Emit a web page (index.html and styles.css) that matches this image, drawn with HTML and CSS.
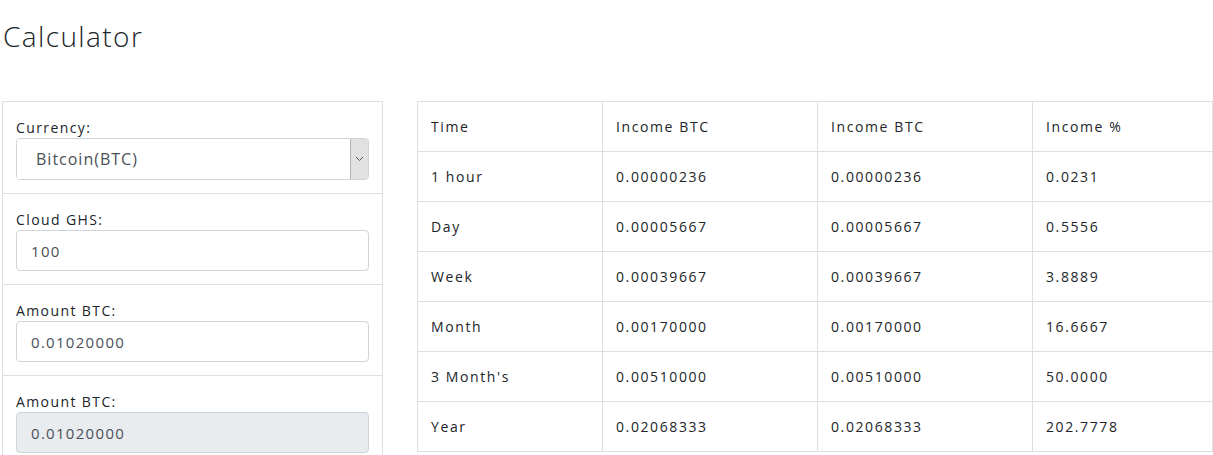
FILE: index.html
```html
<!DOCTYPE html>
<html lang="en">
<head>
    <meta charset="UTF-8">
    <meta name="viewport" content="width=device-width, initial-scale=1.0">
    <title>Calculator</title>
    <link rel="stylesheet" href="styles.css">
</head>
<body>
    <div class="page">
        <h1>Calculator</h1>
        <div class="calc-row">
            <div class="calc-form">
                <div class="calc-item">
                    <label for="currency">Currency:</label>
                    <div class="select-box">
                        <select id="currency">
                            <option>Bitcoin(BTC)</option>
                        </select>
                        <span class="select-arrow">
                            <svg width="9" height="6" viewBox="0 0 9 6"><path d="M1 1l3.5 3.5L8 1" fill="none" stroke="#555" stroke-width="1"/></svg>
                        </span>
                    </div>
                </div>
                <div class="calc-item">
                    <label for="ghs">Cloud GHS:</label>
                    <input type="text" id="ghs" class="field" value="100">
                </div>
                <div class="calc-item">
                    <label for="amount">Amount BTC:</label>
                    <input type="text" id="amount" class="field" value="0.01020000">
                </div>
                <div class="calc-item">
                    <label for="amount2">Amount BTC:</label>
                    <input type="text" id="amount2" class="field" value="0.01020000" disabled>
                </div>
            </div>

            <table class="income-table">
                <colgroup>
                    <col class="col-time">
                    <col class="col-btc">
                    <col class="col-btc">
                    <col>
                </colgroup>
                <thead>
                    <tr><th>Time</th><th>Income BTC</th><th>Income BTC</th><th>Income %</th></tr>
                </thead>
                <tbody>
                    <tr><td>1 hour</td><td>0.00000236</td><td>0.00000236</td><td>0.0231</td></tr>
                    <tr><td>Day</td><td>0.00005667</td><td>0.00005667</td><td>0.5556</td></tr>
                    <tr><td>Week</td><td>0.00039667</td><td>0.00039667</td><td>3.8889</td></tr>
                    <tr><td>Month</td><td>0.00170000</td><td>0.00170000</td><td>16.6667</td></tr>
                    <tr><td>3 Month's</td><td>0.00510000</td><td>0.00510000</td><td>50.0000</td></tr>
                    <tr><td>Year</td><td>0.02068333</td><td>0.02068333</td><td>202.7778</td></tr>
                </tbody>
            </table>
        </div>
    </div>
</body>
</html>
```

FILE: styles.css
```css
body {
    margin: 0;
    font-family: 'Open Sans', sans-serif;
    font-size: 14px;
    color: #212529;
    background: #fff;
}
.page {
    padding: 0 0 0 2px;
}
h1 {
    font-weight: 300;
    font-size: 28px;
    margin: 0;
    padding: 16px 0 0 1px;
    height: 101px;
    box-sizing: border-box;
    line-height: 40px;
    letter-spacing: 1.4px;
}
.calc-row {
    display: flex;
    gap: 34px;
    align-items: flex-start;
}
.calc-form {
    width: 381px;
    flex: none;
    border: 1px solid #dfdfdf;
    box-sizing: border-box;
}
.calc-item {
    padding: 15px 13px 13px;
    border-top: 1px solid #dfdfdf;
}
.calc-item:first-child {
    border-top: none;
}
.calc-item label {
    display: block;
    line-height: 21px;
    letter-spacing: 1.4px;
}
.field {
    display: block;
    width: 100%;
    box-sizing: border-box;
    height: 41px;
    padding: 0 14px;
    border: 1px solid #ced4da;
    border-radius: 4px;
    font-family: 'Open Sans', sans-serif;
    font-size: 15px;
    color: #495057;
    letter-spacing: 1.3px;
    background: #fff;
}
.field:disabled {
    background: #e9ecef;
    color: #495057;
}
.select-box {
    display: flex;
    height: 42px;
    box-sizing: border-box;
    border: 1px solid #ced4da;
    border-radius: 4px;
    overflow: hidden;
}
.select-box select {
    flex: 1;
    appearance: none;
    -webkit-appearance: none;
    border: none;
    background: #fff;
    font-family: 'Open Sans', sans-serif;
    font-size: 16px;
    color: #495057;
    padding: 0 0 0 19px;
    letter-spacing: 1px;
    outline: none;
}
.select-arrow {
    width: 17px;
    background: #e1e1e1;
    border-left: 1px solid #b5b5b5;
    display: flex;
    align-items: center;
    justify-content: center;
}
.income-table {
    flex: 1;
    border-collapse: collapse;
    table-layout: fixed;
}
.col-time {
    width: 185px;
}
.col-btc {
    width: 215px;
}
.income-table th,
.income-table td {
    border: 1px solid #dfdfdf;
    height: 49px;
    padding: 0 13px;
    text-align: left;
    font-weight: 400;
    letter-spacing: 1.6px;
}
```
